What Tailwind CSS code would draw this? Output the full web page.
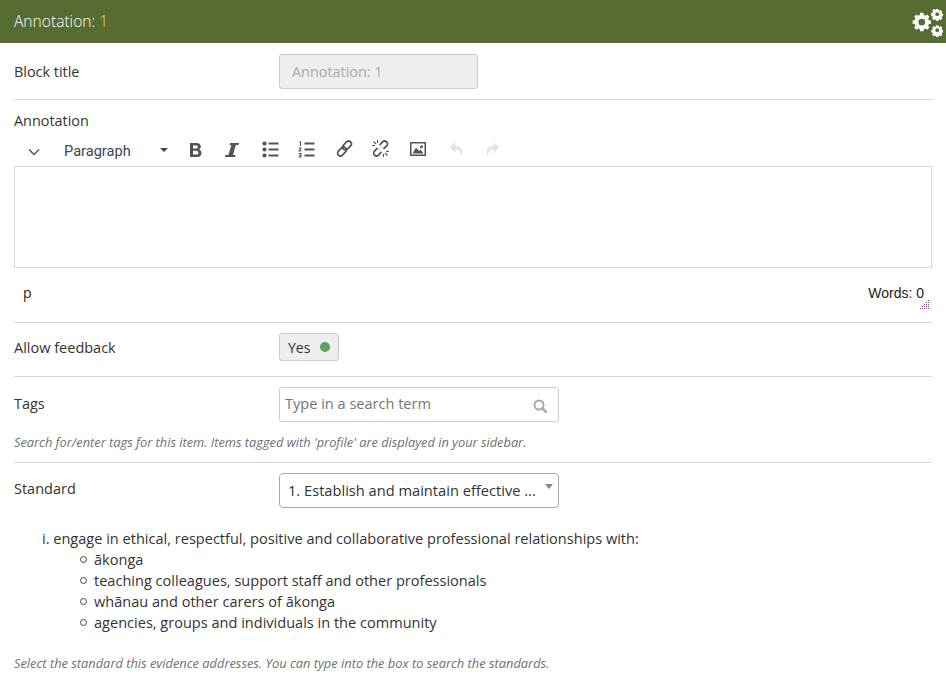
<!DOCTYPE html>
<html lang="en">
<head>
    <meta charset="UTF-8">
    <title>Annotation</title>
    <script src="https://cdn.jsdelivr.net/npm/@tailwindcss/browser@4"></script>
</head>
<body class="bg-white font-['Open_Sans',sans-serif] text-[14.55px] leading-[21px] text-[#333] overflow-hidden h-[676px]">

    <!-- Block header -->
    <div class="h-[43px] bg-[#566c33] flex items-center justify-between pl-[14px] pr-[3px]">
        <h1 class="text-[15.6px] font-light text-white">Annotation: <span class="text-[#f0c98a]">1</span></h1>
        <svg class="w-[32px] h-[28px] mt-[3px]" viewBox="0 0 32 28" fill="#fff">
            <path transform="translate(0 -3.800) scale(.9)" fill-rule="evenodd" d="M10.200 8.500h3.600l.5 2.400 1.600.7 2-1.300 2.500 2.500-1.300 2 .7 1.700 2.400.5v3.500l-2.400.5-.7 1.700 1.300 2-2.500 2.500-2-1.300-1.600.7-.5 2.400h-3.600l-.5-2.400-1.600-.7-2 1.300-2.500-2.500 1.300-2-.7-1.700-2.400-.5V17l2.400-.5.7-1.700-1.300-2 2.500-2.500 2 1.300 1.600-.7zM12 15a3.800 3.800 0 1 0 0 7.600 3.800 3.800 0 0 0 0-7.600z"/>
            <path transform="translate(3 0) scale(.9)" fill-rule="evenodd" d="M24.500 0h2.600l.3 1.500 1 .4 1.300-.9 1.800 1.800-.9 1.300.4 1 1.500.3v2.600l-1.500.3-.4 1 .9 1.300-1.800 1.800-1.300-.9-1 .4-.3 1.500h-2.600l-.3-1.500-1-.4-1.300.9-1.800-1.800.9-1.300-.4-1-1.500-.3V4.400l1.500-.3.4-1-.9-1.300 1.800-1.800 1.300.9 1-.4zM25.800 3.500a2.200 2.200 0 1 0 0 4.400 2.200 2.200 0 0 0 0-4.400z"/>
            <path transform="translate(3 0) scale(.9)" fill-rule="evenodd" d="M24.500 18h2.600l.3 1.500 1 .4 1.300-.9 1.800 1.800-.9 1.300.4 1 1.500.3v2.600l-1.500.3-.4 1 .9 1.300-1.800 1.800-1.300-.9-1 .4-.3 1.500h-2.600l-.3-1.500-1-.4-1.300.9-1.800-1.800.9-1.300-.4-1-1.500-.3v-2.600l1.500-.3.4-1-.9-1.300 1.800-1.800 1.300.9 1-.4zM25.800 21.500a2.200 2.200 0 1 0 0 4.400 2.200 2.200 0 0 0 0-4.400z"/>
        </svg>
    </div>

    <div class="pl-[14px] pr-[14px]">
        <!-- Block title -->
        <div class="flex h-[57px] pt-[11px] border-b border-[#d9d9d9]">
            <label class="w-[265px] pt-[7px] text-[14.4px]">Block title</label>
            <div class="w-[199px] h-[35px] bg-[#eeeeee] border border-[#cccccc] rounded-[3px] pl-[12px] flex items-center text-[14.4px] text-[#a9a9a9]">Annotation: 1</div>
        </div>

        <!-- Annotation editor -->
        <div class="h-[223px] border-b border-[#d9d9d9]">
            <label class="block pt-[10px] text-[14.4px]">Annotation</label>
            <div class="h-[35px] flex items-center relative text-[#50545a]">
                <svg class="absolute left-[14px] top-[17px] w-[12px] h-[8px]" viewBox="0 0 12 8" fill="none" stroke="#50545a" stroke-width="1.500"><path d="M1 1.500l5 5 5-5"/></svg>
                <span class="absolute left-[50px] top-[10px] font-['Roboto',sans-serif] text-[14.6px] text-[#40454b]">Paragraph</span>
                <span class="absolute left-[146px] top-[17px] w-0 h-0 border-x-[4px] border-x-transparent border-t-[4px] border-t-[#40454b]"></span>
                <svg class="absolute left-[175px] top-[11px] w-[14px] h-[16px]" viewBox="0 0 14 16" fill="#50545a"><path fill-rule="evenodd" d="M1 1h6.500c2.800 0 4.300 1.300 4.300 3.500 0 1.400-.7 2.400-1.800 2.900 1.500.5 2.500 1.600 2.500 3.300C12.500 13.500 10.700 15 8 15H1zm3 2.400v3h3c1.100 0 1.800-.5 1.800-1.500S8.100 3.400 7 3.400zm0 5.300v3.900h3.500c1.300 0 2-.7 2-1.900 0-1.300-.7-2-2-2z"/></svg>
                <svg class="absolute left-[211px] top-[11px] w-[14px] h-[16px]" viewBox="0 0 14 16" fill="#50545a"><path d="M5 1h9l-.4 2h-2.800L8 13h2.500l-.4 2H0l.4-2h3L6.300 3H4.600z"/></svg>
                <svg class="absolute left-[248px] top-[10px] w-[17px] h-[17px]" viewBox="0 0 17 17" fill="#50545a"><circle cx="2.500" cy="2.500" r="2.100"/><circle cx="2.500" cy="8.500" r="2.100"/><circle cx="2.500" cy="14.500" r="2.100"/><rect x="6.500" y="1.500" width="10" height="2"/><rect x="6.500" y="7.500" width="10" height="2"/><rect x="6.500" y="13.500" width="10" height="2"/></svg>
                <svg class="absolute left-[284px] top-[10px] w-[17px] h-[17px]" viewBox="0 0 17 17" fill="#50545a"><path d="M1 .5h2v4.500H2V1.500H1zM.5 6.500h3v1L1.800 9.500h1.700v1h-3v-1l1.700-2H.5zM.5 12h3v4.500h-3v-1h2v-.8h-1.500v-1H2.500V13h-2z"/><rect x="6.500" y="1.500" width="10" height="2"/><rect x="6.500" y="7.500" width="10" height="2"/><rect x="6.500" y="13.500" width="10" height="2"/></svg>
                <svg class="absolute left-[322px] top-[9px] w-[17px] h-[17px]" viewBox="0 0 17 17" fill="none" stroke="#50545a" stroke-width="1.700"><rect x="6" y="2.700" width="10" height="5.600" rx="2.800" transform="rotate(-45 11 5.500)"/><rect x="1" y="8.700" width="10" height="5.600" rx="2.800" transform="rotate(-45 6 11.500)"/></svg>
                <svg class="absolute left-[358px] top-[9px] w-[17px] h-[17px]" viewBox="0 0 17 17" fill="none" stroke="#50545a" stroke-width="1.700"><rect x="6" y="2.700" width="10" height="5.600" rx="2.800" transform="rotate(-45 11 5.500)"/><rect x="1" y="8.700" width="10" height="5.600" rx="2.800" transform="rotate(-45 6 11.500)"/><path stroke="#fff" stroke-width="3.500" d="M3 3l11 11"/><path stroke-width="1.100" d="M5.500 0v3M0 5.500h3M11.500 17v-3M17 11.500h-3M1.500 1.500L4 4M15.500 15.500L13 13"/></svg>
                <svg class="absolute left-[396px] top-[11px] w-[16px] h-[14px]" viewBox="0 0 16 14" fill="#50545a"><path fill-rule="evenodd" d="M0 0h16v14H0zm1.500 1.500v11h13v-11zM2.500 11.500l3.500-6 3 3.500 1.500-1.500 3 4zM11.500 3.300a1.500 1.500 0 1 0 0 3 1.500 1.500 0 0 0 0-3z"/></svg>
                <svg class="absolute left-[435px] top-[11px] w-[15px] h-[15px]" viewBox="0 0 15 15" fill="#e3e3e3"><path d="M6.500 0L.5 5.500l6 5.500V7.500c3 0 5 1 5.500 7 2.500-4 2.500-10-5.500-10.500z"/></svg>
                <svg class="absolute left-[471px] top-[11px] w-[15px] h-[15px]" viewBox="0 0 15 15" fill="#e3e3e3"><path d="M8.500 0l6 5.500-6 5.500V7.500c-3 0-5 1-5.500 7C.5 10.500.5 4.500 8.500 4z"/></svg>
            </div>
            <div class="h-[102px] border border-[#d9d9d9]"></div>
            <div class="h-[54px] relative">
                <span class="absolute left-[9px] top-[14px] text-[14px] text-[#222]">p</span>
                <span class="absolute right-[8px] top-[15px] font-['Liberation_Sans',sans-serif] text-[14px] text-[#222]">Words: 0</span>
                <svg class="absolute right-[2px] top-[32px] w-[10px] h-[10px]" viewBox="0 0 10 10" fill="#7a4f86"><rect x="8" y="0" width="1" height="1"/><rect x="6" y="2" width="1" height="1"/><rect x="8" y="2" width="1" height="1"/><rect x="4" y="4" width="1" height="1"/><rect x="6" y="4" width="1" height="1"/><rect x="8" y="4" width="1" height="1"/><rect x="2" y="6" width="1" height="1"/><rect x="4" y="6" width="1" height="1"/><rect x="6" y="6" width="1" height="1"/><rect x="8" y="6" width="1" height="1"/><rect x="0" y="8" width="1" height="1"/><rect x="2" y="8" width="1" height="1"/><rect x="4" y="8" width="1" height="1"/><rect x="6" y="8" width="1" height="1"/><rect x="8" y="8" width="1" height="1"/></svg>
            </div>
        </div>

        <!-- Allow feedback -->
        <div class="flex h-[54px] pt-[10px] border-b border-[#d9d9d9]">
            <label class="w-[265px] pt-[4px] text-[14.5px]">Allow feedback</label>
            <div class="w-[60px] h-[28px] bg-[#eeeeee] border border-[#cccccc] rounded-[3px] pl-[8px] flex items-center gap-[10px]">
                <span class="text-[14px]">Yes</span>
                <span class="w-[10px] h-[10px] rounded-full bg-[#5ba45c]"></span>
            </div>
        </div>

        <!-- Tags -->
        <div class="h-[86px] pt-[10px] border-b border-[#d9d9d9]">
            <div class="flex">
                <label class="w-[265px] pt-[6px] text-[14.4px]">Tags</label>
                <div class="w-[280px] h-[35px] bg-white border border-[#cccccc] rounded-[3px] pl-[5px] pr-[11px] flex items-center justify-between text-[#757575]">
                    <span class="mt-[-2px]">Type in a search term</span>
                    <svg class="w-[14px] h-[14px] mt-[2px]" viewBox="0 0 14 14" fill="none" stroke="#a8a8a8" stroke-width="2"><circle cx="6" cy="6" r="4.500"/><path d="M9.500 9.500l4 4" stroke-width="2.500"/></svg>
                </div>
            </div>
            <p class="mt-[10px] text-[12.8px] italic text-[#6f6f6f]">Search for/enter tags for this item. Items tagged with 'profile' are displayed in your sidebar.</p>
        </div>

        <!-- Standard -->
        <div class="pt-[10px]">
            <div class="flex">
                <label class="w-[265px] pt-[5px] text-[14.5px]">Standard</label>
                <div class="w-[280px] h-[35px] bg-white border border-[#aaaaaa] rounded-[4px] pl-[8px] flex items-center relative">
                    <span class="text-[14.65px]">1. Establish and maintain effective ...</span>
                    <span class="absolute right-[5px] top-[10px] w-0 h-0 border-x-[4px] border-x-transparent border-t-[5px] border-t-[#888888]"></span>
                </div>
            </div>
            <div class="mt-[20px] pl-[28px]">
                <p>i. engage in ethical, respectful, positive and collaborative professional relationships with:</p>
                <ul class="pl-[38px]">
                    <li class="flex items-center gap-[7px]"><span class="w-[7px] h-[7px] rounded-full border border-[#444]"></span>ākonga</li>
                    <li class="flex items-center gap-[7px]"><span class="w-[7px] h-[7px] rounded-full border border-[#444]"></span>teaching colleagues, support staff and other professionals</li>
                    <li class="flex items-center gap-[7px]"><span class="w-[7px] h-[7px] rounded-full border border-[#444]"></span>whānau and other carers of ākonga</li>
                    <li class="flex items-center gap-[7px]"><span class="w-[7px] h-[7px] rounded-full border border-[#444]"></span>agencies, groups and individuals in the community</li>
                </ul>
            </div>
            <p class="mt-[20px] text-[12.85px] italic text-[#6f6f6f]">Select the standard this evidence addresses. You can type into the box to search the standards.</p>
        </div>
    </div>

</body>
</html>
